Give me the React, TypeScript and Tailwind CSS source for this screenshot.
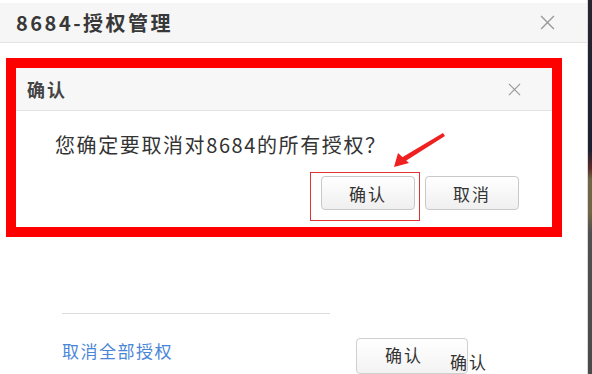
const cjk = { fontFamily: '"Noto Sans CJK SC", "Noto Sans", sans-serif' };

function CloseIcon({ size = 14 }: { size?: number }) {
  return (
    <svg width={size} height={size} viewBox="0 0 14 14" fill="none">
      <path d="M1 1L13 13M13 1L1 13" stroke="#9a9a9a" strokeWidth="1.3" />
    </svg>
  );
}

function Btn({ label }: { label: string }) {
  return (
    <button className="flex h-[34px] w-[94px] items-center justify-center rounded-[4px] border border-[#c9c9c9] bg-[linear-gradient(#ffffff,#efefef)] text-[17px] tracking-[2px] text-[#333]">
      {label}
    </button>
  );
}

export default function App() {
  return (
    <div className="relative flex h-[374px] w-[592px] overflow-hidden bg-white" style={cjk}>
      <div className="flex flex-1 flex-col pt-[3px]">
        {/* outer dialog header */}
        <div className="flex h-[42px] items-center justify-between border-b border-[#e4e4e4] bg-[#f6f6f6] pl-[16px] pr-[32px]">
          <span className="text-[20px] font-bold tracking-[2.5px] text-[#383838]">8684-授权管理</span>
          <CloseIcon size={15} />
        </div>

        {/* highlighted confirm box */}
        <div className="ml-[6px] mt-[15px] flex h-[185px] w-[556px] flex-col border-[10px] border-[#ff0000]">
          <div className="flex h-[43px] items-center justify-between border-b border-[#e2e2e2] bg-[#f7f7f7] pl-[11px] pr-[31px]">
            <span className="text-[18px] font-bold tracking-[2px] text-[#444]">确认</span>
            <CloseIcon size={13} />
          </div>
          <div className="flex flex-1 flex-col bg-white">
            <p className="pl-[39px] pt-[21px] text-[20px] leading-[26px] tracking-[1.6px] text-[#333]">
              您确定要取消对8684的所有授权？
            </p>
            <div className="mt-[18px] flex justify-end gap-[10px] pr-[33px]">
              <Btn label="确认" />
              <Btn label="取消" />
            </div>
          </div>
        </div>

        {/* footer */}
        <div className="ml-[62px] mt-[76px] h-px w-[268px] bg-[#dcdcdc]" />
        <div className="mt-[20px] flex items-start">
          <span className="ml-[62px] mt-[4px] text-[17px] tracking-[1.5px] text-[#4a86d8]">取消全部授权</span>
          <button className="ml-[183px] mt-[4px] flex h-[36px] w-[112px] items-start rounded-[4px] border border-[#cfcfcf] bg-[linear-gradient(#ffffff,#f3f3f3)] pl-[28px] pt-[6px] text-[17px] leading-[20px] tracking-[2px] text-[#333]">
            确认
          </button>
        </div>
      </div>

      {/* right edge strip */}
      <div className="w-[5px] border-l border-[#d8d8d8] bg-[linear-gradient(#262630_0%,#1c2030_40%,#5a2a2a_45%,#6e6645_48%,#6e6645_57%,#505050_62%,#4a4a4a_100%)]" />

      {/* annotation: thin box around confirm */}
      <div className="absolute left-[310px] top-[172px] h-[49px] w-[110px] border-[1.5px] border-[#e03434]" />

      {/* annotation: arrow */}
      <svg className="absolute left-[385px] top-[128px]" width="65" height="45" viewBox="0 0 65 45">
        <polygon points="58,5 60,8 19,34 16,30" fill="#ee2020" />
        <polygon points="9,39 13,25 24,35" fill="#ee2020" />
      </svg>

      {/* ghost duplicated text */}
      <span className="absolute left-[450px] top-[352px] text-[17px] leading-[20px] tracking-[2px] text-[#333]">确认</span>
    </div>
  );
}
